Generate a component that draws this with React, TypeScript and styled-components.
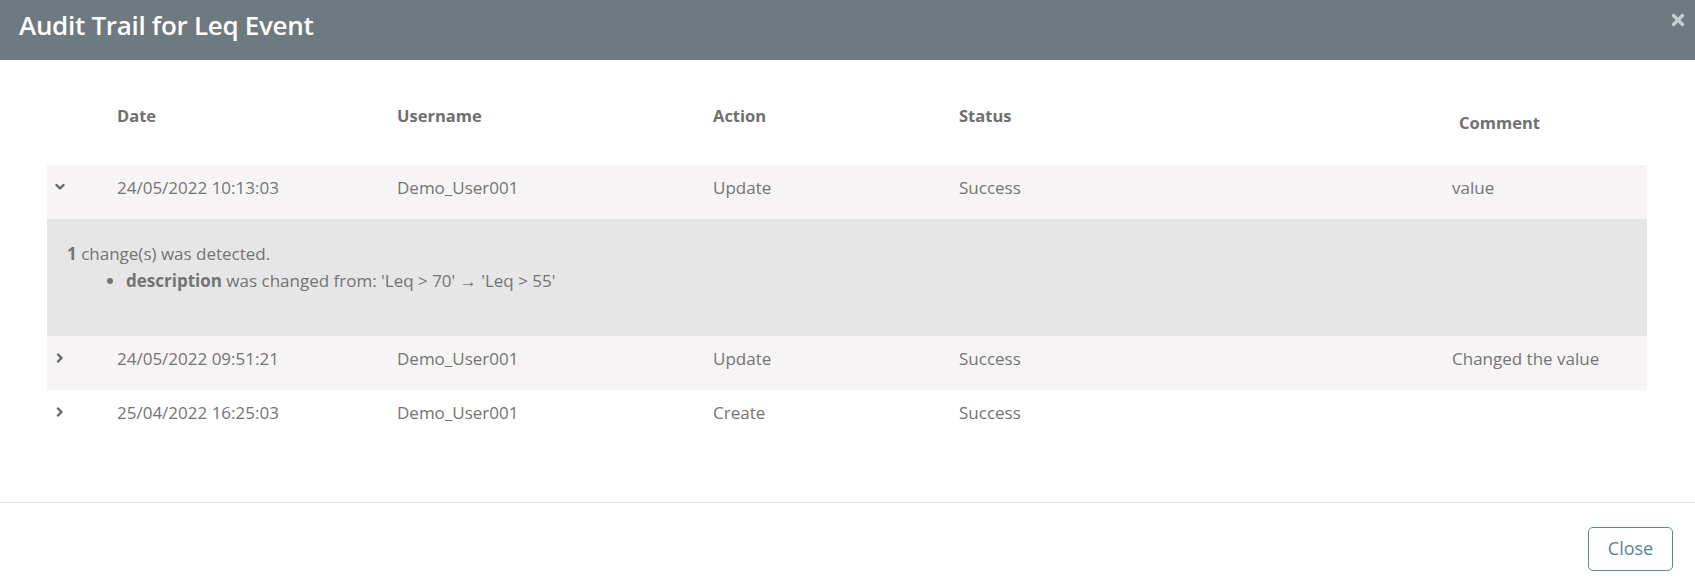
import React from "react";
import styled, { createGlobalStyle } from "styled-components";

type AuditEntry = {
  date: string;
  username: string;
  action: string;
  status: string;
  comment: string;
  expanded: boolean;
  changes?: Array<{ field: string; from: string; to: string }>;
};

const entries: Array<AuditEntry> = [
  {
    date: "24/05/2022 10:13:03",
    username: "Demo_User001",
    action: "Update",
    status: "Success",
    comment: "value",
    expanded: true,
    changes: [{ field: "description", from: "'Leq > 70'", to: "'Leq > 55'" }],
  },
  {
    date: "24/05/2022 09:51:21",
    username: "Demo_User001",
    action: "Update",
    status: "Success",
    comment: "Changed the value",
    expanded: false,
  },
  {
    date: "25/04/2022 16:25:03",
    username: "Demo_User001",
    action: "Create",
    status: "Success",
    comment: "",
    expanded: false,
  },
];

const GlobalStyle = createGlobalStyle`
  html, body {
    margin: 0;
    padding: 0;
    background: #ffffff;
    font-family: "Open Sans", "Noto Sans", sans-serif;
  }
`;

const Modal = styled.div`
  display: flex;
  flex-direction: column;
  height: 581px;
  background: #ffffff;
`;

const ModalHeader = styled.header`
  position: relative;
  display: flex;
  align-items: center;
  height: 60px;
  padding: 0 19px;
  background: #6e7a80;
  box-sizing: border-box;
`;

const Title = styled.h1`
  margin: 0 0 10px;
  color: #ffffff;
  font-size: 26px;
  font-weight: 600;
  letter-spacing: -0.3px;
`;

const CloseIcon = styled.button`
  position: absolute;
  top: 12px;
  right: 9px;
  display: flex;
  padding: 0;
  border: none;
  background: transparent;
  cursor: pointer;
`;

const ModalBody = styled.main`
  flex: 1;
  padding: 0 48px 0 47px;
`;

const Row = styled.div<{ $shaded?: boolean }>`
  display: grid;
  grid-template-columns: 70px 280px 316px 246px 493px 1fr;
  align-items: start;
  height: 54px;
  padding-top: 11px;
  box-sizing: border-box;
  background: ${(p) => (p.$shaded ? "#f6f4f5" : "transparent")};
  color: #747474;
  font-size: 17px;
  line-height: 24px;
`;

const HeadRow = styled(Row)`
  height: 105px;
  padding-top: 44px;
  color: #6f6f6f;
  font-size: 16.5px;
  font-weight: 700;
`;

const HeadCell = styled.div<{ $offset?: number }>`
  padding-top: ${(p) => p.$offset ?? 0}px;
  padding-left: ${(p) => (p.$offset ? 7 : 0)}px;
`;

const Cell = styled.div`
  white-space: nowrap;
`;

const Toggle = styled.div`
  display: flex;
  align-items: center;
  height: 22px;
  padding-left: 8px;
`;

const Details = styled.div`
  height: 117px;
  padding: 21px 20px 0;
  box-sizing: border-box;
  background: #e6e6e6;
  color: #747474;
  font-size: 17px;
  line-height: 27px;
`;

const ChangeList = styled.ul`
  margin: 0;
  padding-left: 59px;
`;

const ModalFooter = styled.footer`
  display: flex;
  justify-content: flex-end;
  align-items: flex-start;
  height: 79px;
  padding: 24px 22px 0 0;
  border-top: 1px solid #e0e0e4;
  box-sizing: border-box;
`;

const CloseButton = styled.button`
  width: 85px;
  height: 44px;
  padding: 0 0 2px;
  border: 1px solid #5e8a8f;
  border-radius: 5px;
  background: #ffffff;
  color: #5a868b;
  font-family: "Open Sans", "Noto Sans", sans-serif;
  font-size: 18px;
  cursor: pointer;
`;

const Chevron = ({ open }: { open: boolean }): JSX.Element => (
  <svg width="10" height="10" viewBox="0 0 10 10">
    <path
      d={open ? "M1.5 3 L5 6.5 L8.5 3" : "M3 1.5 L6.5 5 L3 8.5"}
      fill="none"
      stroke="#666666"
      strokeWidth="2.4"
      strokeLinecap="round"
      strokeLinejoin="round"
    />
  </svg>
);

// striping counts the detail panel as a row of its own
const stripes = (list: Array<AuditEntry>): Array<boolean> => {
  let index = 0;
  return list.map((entry) => {
    const shaded = index % 2 === 0;
    index += entry.expanded ? 2 : 1;
    return shaded;
  });
};

const App = (): JSX.Element => {
  const shading = stripes(entries);
  return (
    <>
      <GlobalStyle />
      <Modal>
        <ModalHeader>
          <Title>Audit Trail for Leq Event</Title>
          <CloseIcon aria-label="close">
            <svg width="16" height="16" viewBox="0 0 16 16">
              <path
                d="M3.5 3.5 L12.5 12.5 M12.5 3.5 L3.5 12.5"
                stroke="#c6ced1"
                strokeWidth="3.4"
                strokeLinecap="round"
              />
            </svg>
          </CloseIcon>
        </ModalHeader>
        <ModalBody>
          <HeadRow>
            <HeadCell />
            <HeadCell>Date</HeadCell>
            <HeadCell>Username</HeadCell>
            <HeadCell>Action</HeadCell>
            <HeadCell>Status</HeadCell>
            <HeadCell $offset={7}>Comment</HeadCell>
          </HeadRow>
          {entries.map((entry, i) => (
            <React.Fragment key={entry.date}>
              <Row $shaded={shading[i]}>
                <Toggle>
                  <Chevron open={entry.expanded} />
                </Toggle>
                <Cell>{entry.date}</Cell>
                <Cell>{entry.username}</Cell>
                <Cell>{entry.action}</Cell>
                <Cell>{entry.status}</Cell>
                <Cell>{entry.comment}</Cell>
              </Row>
              {entry.expanded && entry.changes && (
                <Details>
                  <div>
                    <b>{entry.changes.length}</b> change(s) was detected.
                  </div>
                  <ChangeList>
                    {entry.changes.map((change) => (
                      <li key={change.field}>
                        <b>{change.field}</b> was changed from: {change.from} → {change.to}
                      </li>
                    ))}
                  </ChangeList>
                </Details>
              )}
            </React.Fragment>
          ))}
        </ModalBody>
        <ModalFooter>
          <CloseButton>Close</CloseButton>
        </ModalFooter>
      </Modal>
    </>
  );
};

export default App;
